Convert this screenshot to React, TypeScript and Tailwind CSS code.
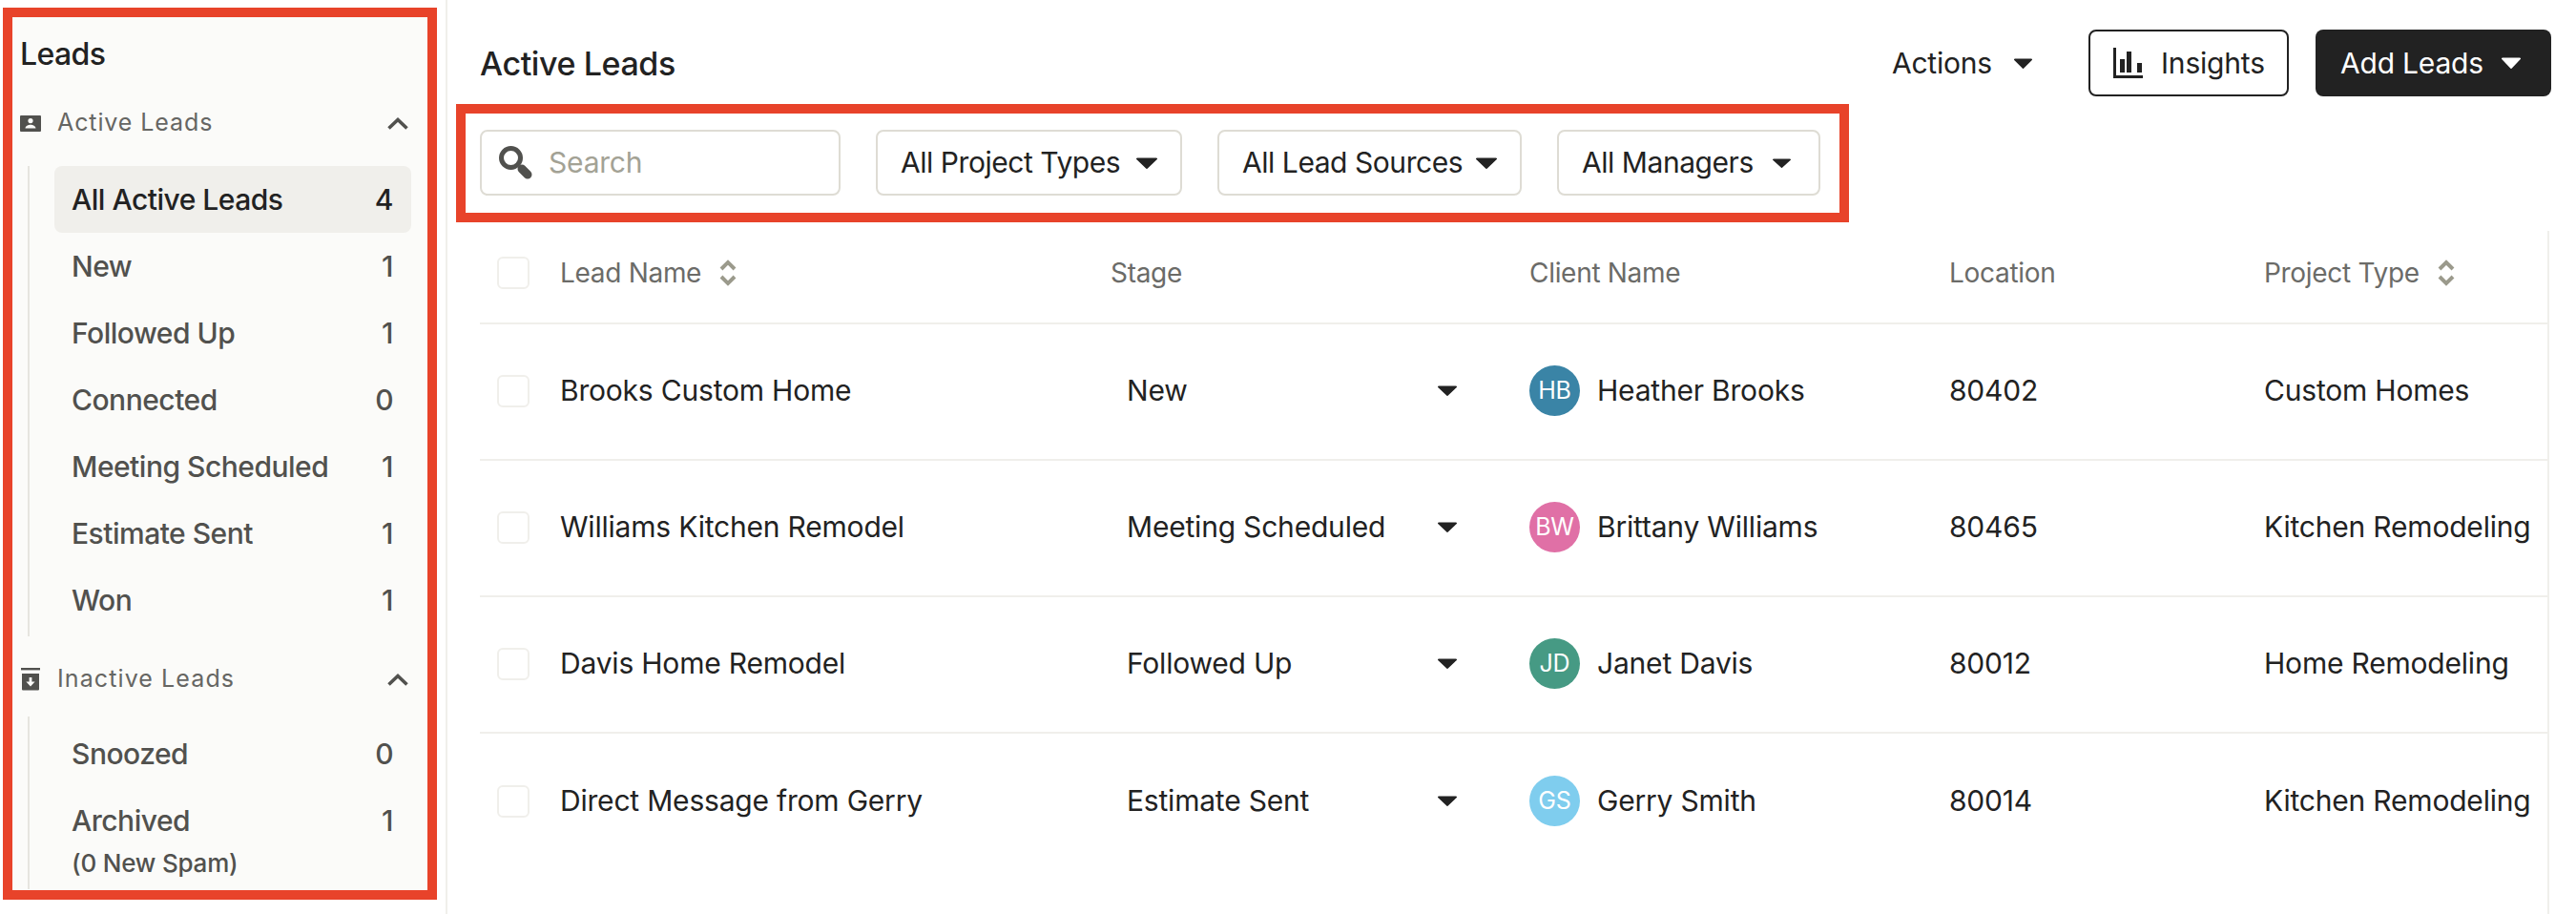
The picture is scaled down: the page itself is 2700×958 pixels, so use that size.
import { ReactNode } from "react";

const activeStages = [
    { label: "New", count: 1 },
    { label: "Followed Up", count: 1 },
    { label: "Connected", count: 0 },
    { label: "Meeting Scheduled", count: 1 },
    { label: "Estimate Sent", count: 1 },
    { label: "Won", count: 1 },
];

const leads = [
    { name: "Brooks Custom Home", stage: "New", initials: "HB", avatar: "bg-[#3a84a6]", client: "Heather Brooks", location: "80402", type: "Custom Homes" },
    { name: "Williams Kitchen Remodel", stage: "Meeting Scheduled", initials: "BW", avatar: "bg-[#e070a6]", client: "Brittany Williams", location: "80465", type: "Kitchen Remodeling" },
    { name: "Davis Home Remodel", stage: "Followed Up", initials: "JD", avatar: "bg-[#469a84]", client: "Janet Davis", location: "80012", type: "Home Remodeling" },
    { name: "Direct Message from Gerry", stage: "Estimate Sent", initials: "GS", avatar: "bg-[#7fcdee]", client: "Gerry Smith", location: "80014", type: "Kitchen Remodeling" },
];

const gridCols = "grid grid-cols-[66px_577px_439px_440px_330px_1fr] items-center";

function Caret({ className }: { className: string }) {
    return (
        <svg viewBox="0 0 20 12" preserveAspectRatio="none" className={className}>
            <path d="M1 0.5h18a1 1 0 0 1 .8 1.6l-9 9.4a1 1 0 0 1-1.6 0l-9-9.4A1 1 0 0 1 1 .5z" fill="currentColor" />
        </svg>
    );
}

function SortIcon() {
    return (
        <svg viewBox="0 0 18 30" className="h-[30px] w-[18px] text-[#9b9a8c]" fill="none" stroke="currentColor" strokeWidth="4">
            <path d="M2 11l7-7 7 7" />
            <path d="M2 19l7 7 7-7" />
        </svg>
    );
}

function Chevron() {
    return (
        <svg viewBox="0 0 22 13" className="mr-[3px] h-[13px] w-[22px] text-[#51514e]" fill="none" stroke="currentColor" strokeWidth="3.6">
            <path d="M1.5 11.5L11 2.5l9.5 9" />
        </svg>
    );
}

function Checkbox() {
    return <div className="h-[34px] w-[34px] rounded-md border-2 border-[#f0efeb] bg-white" />;
}

function SideItem({ label, count, active, children }: { label: string; count: number; active?: boolean; children?: ReactNode }) {
    return (
        <div className={`flex h-[70px] items-center justify-between rounded-lg pl-[18px] pr-[19px] ${active ? "bg-[#f0efeb] text-[#222222]" : "text-[#51514e]"}`}>
            <span>{label}</span>
            <span>{count}</span>
            {children}
        </div>
    );
}

function FilterSelect({ label, width, caret, padRight }: { label: string; width: string; caret: string; padRight: string }) {
    return (
        <div className={`flex h-[69px] items-center justify-between rounded-lg border-2 border-[#dedcd4] pl-6 tracking-[-0.45px] text-[#222222] ${padRight} ${width}`}>
            <span>{label}</span>
            <Caret className={caret} />
        </div>
    );
}

export default function App() {
    return (
        <div className="flex h-[958px] w-[2700px] overflow-hidden bg-white font-['Inter',sans-serif] text-[30px] font-normal tracking-[-0.2px] text-[#222222]">
            {/* Sidebar */}
            <div className="h-full w-[469px] shrink-0 border-r-2 border-[#f0efeb] pl-[3px] pt-2">
                <div className="h-[935px] w-[455px] border-[10px] border-[#e8432a] bg-[#fbfbf9] pl-2 pr-[17px]">
                    <div className="flex h-[78px] items-center text-[32px] font-medium tracking-[-0.6px] text-[#222222]">Leads</div>

                    {/* Active section */}
                    <div className="flex h-[78px] items-center pb-[12px] text-[#666663]">
                        <svg viewBox="0 0 22 17" className="h-[17px] w-[22px] fill-current text-[#51514e]">
                            <path fillRule="evenodd" d="M1 0h20a1 1 0 0 1 1 1v15a1 1 0 0 1-1 1H1a1 1 0 0 1-1-1V1a1 1 0 0 1 1-1zm10 3a2.6 2.6 0 1 0 0 5.2A2.6 2.6 0 0 0 11 3zM5.5 13.5h11c0-2.4-3.2-3.8-5.5-3.8s-5.5 1.4-5.5 3.8z" />
                        </svg>
                        <span className="ml-[17px] flex-1 text-[25px] tracking-[0.9px]">Active Leads</span>
                        <Chevron />
                    </div>
                    <div className="ml-[8px] border-l-2 border-[#e6e5df] pb-[3px] pl-[26px] font-medium tracking-[-0.5px]">
                        <SideItem label="All Active Leads" count={4} active />
                        {activeStages.map((s) => (
                            <SideItem key={s.label} label={s.label} count={s.count} />
                        ))}
                    </div>

                    {/* Inactive section */}
                    <div className="mt-[6px] flex h-[78px] items-center text-[#666663]">
                        <svg viewBox="0 0 20 24" className="ml-[1px] h-[24px] w-[20px] fill-current text-[#51514e]">
                            <path d="M0 0h20v2.4H0z" />
                            <path fillRule="evenodd" d="M1 6h18v16.5a1 1 0 0 1-1 1H2a1 1 0 0 1-1-1V6zm7.6 4v4.4H5.4l4.6 5 4.6-5h-3.2V10H8.6z" />
                        </svg>
                        <span className="ml-[18px] flex-1 text-[25px] tracking-[1.1px]">Inactive Leads</span>
                        <Chevron />
                    </div>
                    <div className="ml-[8px] border-l-2 border-[#e6e5df] pb-[8px] pl-[26px] pt-[4px] font-medium tracking-[-0.5px]">
                        <SideItem label="Snoozed" count={0} />
                        <SideItem label="Archived" count={1} />
                        <div className="-mt-[10px] pl-[18px] text-[26px] tracking-[-0.2px] text-[#51514e]">(0 New Spam)</div>
                    </div>
                </div>
            </div>

            {/* Main */}
            <div className="min-w-0 flex-1 pl-[9px] pr-[28px]">
                {/* Header */}
                <div className="flex h-[109px] items-start justify-between pt-[31px]">
                    <div className="flex h-[70px] items-center pl-[25px] text-[34px] font-medium tracking-[-0.4px]">Active Leads</div>
                    <div className="-mr-[2px] flex items-center">
                        <div className="flex items-center">
                            <span>Actions</span>
                            <Caret className="ml-[23px] h-[11px] w-[19px]" />
                        </div>
                        <div className="ml-[59px] flex h-[70px] w-[210px] items-center rounded-lg border-2 border-[#222222] pl-6">
                            <svg viewBox="0 0 31 32" className="h-[32px] w-[31px]" fill="currentColor">
                                <path d="M0 0h3v29h28v3H0z" />
                                <path d="M7 12h5v14H7zM14 4h5v22h-5zM25 16h5v10h-5z" />
                            </svg>
                            <span className="ml-[19px]">Insights</span>
                        </div>
                        <div className="ml-[28px] flex h-[70px] w-[247px] items-center justify-between rounded-lg bg-[#222222] pl-[26px] pr-[32px] text-white">
                            <span>Add Leads</span>
                            <Caret className="h-[12px] w-[20px]" />
                        </div>
                    </div>
                </div>

                {/* Filters */}
                <div className="flex h-[124px] w-[1460px] items-center gap-[37px] border-[10px] border-[#e8432a] pb-[1px] pl-[15px]">
                    <div className="flex h-[69px] w-[378px] items-center rounded-lg border-2 border-[#dedcd4] pl-[18px]">
                        <svg viewBox="0 0 35 35" className="h-[35px] w-[35px] text-[#51514e]" fill="none" stroke="currentColor">
                            <circle cx="12.5" cy="12.5" r="10" strokeWidth="5" />
                            <path d="M24 24l6 6" strokeWidth="9" strokeLinecap="round" />
                        </svg>
                        <span className="ml-[17px] text-[#a3a295]">Search</span>
                    </div>
                    <FilterSelect label="All Project Types" width="w-[321px]" caret="h-[12px] w-[22px]" padRight="pr-6" />
                    <FilterSelect label="All Lead Sources" width="w-[319px]" caret="h-[12px] w-[22px]" padRight="pr-6" />
                    <FilterSelect label="All Managers" width="w-[276px]" caret="h-[10px] w-[19px]" padRight="pr-[29px]" />
                </div>

                {/* Table */}
                <div className="ml-[25px] mt-[9px] h-[716px] border-r-2 border-[#f0efeb] text-[#222222]">
                    <div className={`${gridCols} h-[98px] border-b-2 border-[#f0efeb] pb-[9px] pl-[18px] text-[28px] tracking-[-0.3px] text-[#6b6b68]`}>
                        <Checkbox />
                        <div className="flex items-center gap-[19px]">
                            <span>Lead Name</span>
                            <SortIcon />
                        </div>
                        <span>Stage</span>
                        <span>Client Name</span>
                        <span>Location</span>
                        <div className="flex items-center gap-[19px]">
                            <span>Project Type</span>
                            <SortIcon />
                        </div>
                    </div>
                    {leads.map((lead, i) => (
                        <div key={lead.name} className={`${gridCols} h-[143px] pb-[2px] pl-[18px] ${i < 3 ? "border-b-2 border-[#f0efeb]" : ""}`}>
                            <Checkbox />
                            <span>{lead.name}</span>
                            <div className="flex items-center justify-between pl-[17px] pr-[76px]">
                                <span>{lead.stage}</span>
                                <Caret className="h-[11px] w-[20px]" />
                            </div>
                            <div className="flex items-center gap-[18px]">
                                <div className={`flex h-[53px] w-[53px] items-center justify-center rounded-full text-[25px] text-white ${lead.avatar}`}>
                                    {lead.initials}
                                </div>
                                <span>{lead.client}</span>
                            </div>
                            <span>{lead.location}</span>
                            <span className="whitespace-nowrap">{lead.type}</span>
                        </div>
                    ))}
                </div>
            </div>
        </div>
    );
}
